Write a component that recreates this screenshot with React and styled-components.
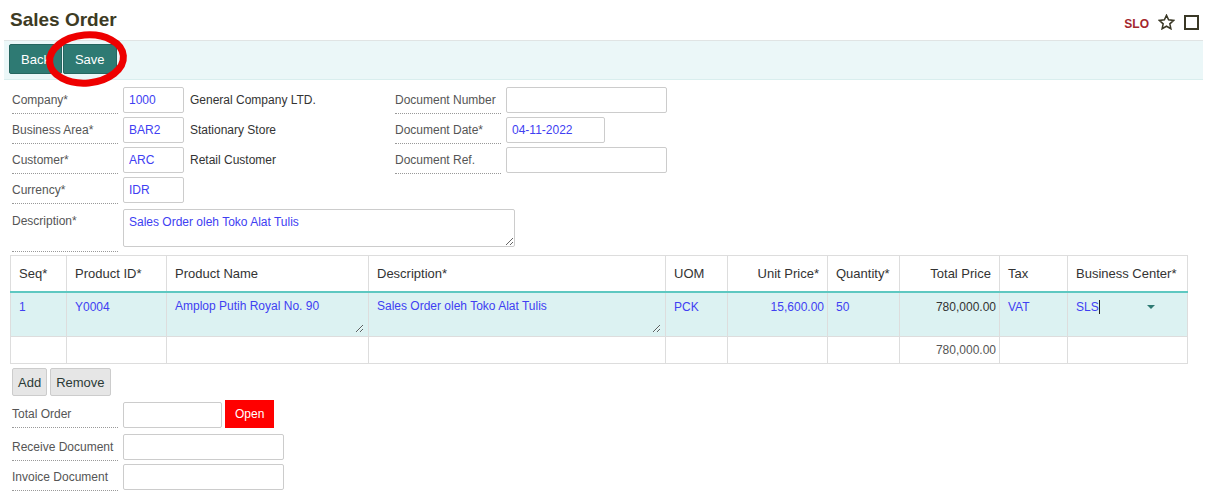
import React from "react";
import styled, { createGlobalStyle } from "styled-components";

const GlobalStyle = createGlobalStyle`
  body {
    margin: 0;
    background: #fff;
    font-family: "Liberation Sans", Arial, sans-serif;
  }
`;

const Page = styled.div`
  width: 1199px;
  padding: 0 4px;
`;

const Header = styled.div`
  height: 40px;
  display: flex;
  align-items: center;
  justify-content: space-between;
  padding: 0 4px 0 6px;
`;

const Title = styled.h1`
  margin: 0;
  font-size: 19px;
  font-weight: bold;
  color: #3d3b24;
`;

const HeaderTools = styled.div`
  display: flex;
  align-items: center;
  gap: 9px;
  margin-top: 4px;
`;

const DocCode = styled.span`
  font-size: 12px;
  font-weight: bold;
  color: #a3262e;
  margin-top: 3px;
`;

const Toolbar = styled.div`
  position: relative;
  height: 32px;
  padding: 3px 5px;
  display: flex;
  gap: 1px;
  background: #ebf7f8;
  border-top: 1px solid #e0e4e4;
  border-bottom: 1px solid #d9eeee;
`;

const ToolButton = styled.button`
  height: 30px;
  padding: 0 11px;
  background: #2e7a73;
  color: #fff;
  border: 1px solid #25655f;
  border-radius: 2px;
  font-family: inherit;
  font-size: 13px;
`;

const Highlight = styled.svg`
  position: absolute;
  left: 41px;
  top: -12px;
  pointer-events: none;
`;

const FormArea = styled.div`
  padding: ${(p) => (p.$flush ? "0" : "7px")} 0 0 8px;
`;

const Columns = styled.div`
  display: flex;
`;

const Column = styled.div`
  width: ${(p) => p.$width || "auto"};
`;

const Row = styled.div`
  display: flex;
  align-items: ${(p) => (p.$bottom ? "flex-end" : "flex-start")};
  margin-top: ${(p) => p.$top || 0}px;
  margin-bottom: ${(p) => (p.$gap === undefined ? 3 : p.$gap)}px;
`;

const Label = styled.div`
  flex-shrink: 0;
  width: 106px;
  height: ${(p) => (p.$tall ? "37px" : "26px")};
  padding-top: ${(p) => (p.$tall ? "7px" : "0")};
  display: flex;
  align-items: ${(p) => (p.$tall ? "flex-start" : "center")};
  border-bottom: 1px dotted #999;
  font-size: 12px;
  line-height: 14px;
  color: #555;
  white-space: nowrap;
`;

const Field = styled.input`
  box-sizing: border-box;
  margin-left: 5px;
  width: ${(p) => p.$width}px;
  height: 26px;
  padding: 0 5px;
  border: 1px solid #ccc;
  border-radius: 2px;
  font-family: inherit;
  font-size: 12px;
  color: #4040f2;
  background: #fff;
`;

const AreaField = styled.textarea`
  box-sizing: border-box;
  margin: 2px 0 0 5px;
  width: 392px;
  height: 38px;
  padding: 5px;
  border: 1px solid #ccc;
  border-radius: 2px;
  font-family: inherit;
  font-size: 12px;
  line-height: 14px;
  color: #4040f2;
  resize: both;
`;

const Static = styled.span`
  margin-left: 6px;
  font-size: 12px;
  line-height: 26px;
  color: #333;
`;

const GridWrap = styled.div`
  margin-left: 6px;
`;

const Grid = styled.table`
  width: 1177px;
  table-layout: fixed;
  border-collapse: collapse;
  font-size: 12px;
`;

const Th = styled.th`
  height: 35px;
  padding: 0 8px;
  border: 1px solid #ddd;
  border-bottom: 2px solid #5ec8c1;
  font-size: 13px;
  font-weight: normal;
  color: #333;
  text-align: ${(p) => p.$align || "left"};
  white-space: nowrap;
`;

const DataRow = styled.tr`
  background: #dcf2f2;
`;

const Td = styled.td`
  height: ${(p) => p.$h || 26}px;
  padding: ${(p) => (p.$align === "right" ? "0 3px 0 4px" : "0 4px")};
  border: 1px solid #ddd;
  vertical-align: ${(p) => (p.$middle ? "middle" : "top")};
  text-align: ${(p) => p.$align || "left"};
  color: ${(p) => p.$color || "#4040f2"};
`;

const CellText = styled.div`
  padding: ${(p) => (p.$plain ? "7px 0 0" : "7px 4px 0")};
  line-height: 14px;
`;

const CellArea = styled.textarea`
  box-sizing: border-box;
  display: block;
  width: 100%;
  height: 38px;
  margin-top: 2px;
  padding: 4px;
  border: none;
  background: transparent;
  font-family: inherit;
  font-size: 12px;
  line-height: 14px;
  color: #4040f2;
  resize: both;
  outline: none;
`;

const SelectCell = styled.div`
  display: flex;
  align-items: center;
  padding: 7px 4px 0;
  line-height: 14px;
`;

const Caret = styled.span`
  width: 1px;
  height: 14px;
  background: #222;
`;

const DropArrow = styled.span`
  margin-left: auto;
  margin-right: 24px;
  width: 0;
  height: 0;
  border-left: 4px solid transparent;
  border-right: 4px solid transparent;
  border-top: 4px solid #2e7a73;
`;

const Actions = styled.div`
  display: flex;
  gap: 3px;
  margin: 4px 0 0 8px;
`;

const GreyButton = styled.button`
  height: 28px;
  padding: 0 5px;
  background: #e6e6e6;
  border: 1px solid #ccc;
  border-radius: 2px;
  font-family: inherit;
  font-size: 13px;
  color: #2b3a36;
`;

const StatusButton = styled.button`
  margin-left: 3px;
  height: 28px;
  padding: 0 10px;
  background: #ff0000;
  border: none;
  font-family: inherit;
  font-size: 12px;
  color: #fff;
`;

const columns = [
  { name: "Seq*", width: 56 },
  { name: "Product ID*", width: 100 },
  { name: "Product Name", width: 202 },
  { name: "Description*", width: 297 },
  { name: "UOM", width: 62 },
  { name: "Unit Price*", width: 100, align: "right" },
  { name: "Quantity*", width: 72 },
  { name: "Total Price", width: 100, align: "right" },
  { name: "Tax", width: 68 },
  { name: "Business Center*", width: 120 },
];

const StarIcon = () => (
  <svg width="17" height="16" viewBox="0 0 24 23">
    <path
      d="M12 1.8l3 6.6 7.2.8-5.4 4.9 1.5 7.1L12 17.6l-6.3 3.6 1.5-7.1L1.8 9.2 9 8.4z"
      fill="none"
      stroke="#3a3826"
      strokeWidth="2.2"
    />
  </svg>
);

const BoxIcon = () => (
  <svg width="15" height="15" viewBox="0 0 15 15">
    <rect x="1" y="1" width="13" height="13" fill="none" stroke="#3a3826" strokeWidth="2" />
  </svg>
);

export default function App() {
  return (
    <Page>
      <GlobalStyle />
      <Header>
        <Title>Sales Order</Title>
        <HeaderTools>
          <DocCode>SLO</DocCode>
          <StarIcon />
          <BoxIcon />
        </HeaderTools>
      </Header>

      <Toolbar>
        <ToolButton>Back</ToolButton>
        <ToolButton>Save</ToolButton>
        {/* red hand-drawn ring round the Save button */}
        <Highlight width="86" height="60" viewBox="0 0 86 60">
          <ellipse
            cx="41.5"
            cy="30"
            rx="37"
            ry="24"
            fill="none"
            stroke="#ee0000"
            strokeWidth="7"
            transform="rotate(-5 41.5 30)"
          />
        </Highlight>
      </Toolbar>

      <FormArea>
        <Columns>
          <Column $width="383px">
            <Row>
              <Label>Company*</Label>
              <Field $width={61} defaultValue="1000" />
              <Static>General Company LTD.</Static>
            </Row>
            <Row>
              <Label>Business Area*</Label>
              <Field $width={61} defaultValue="BAR2" />
              <Static>Stationary Store</Static>
            </Row>
            <Row>
              <Label>Customer*</Label>
              <Field $width={61} defaultValue="ARC" />
              <Static>Retail Customer</Static>
            </Row>
            <Row>
              <Label>Currency*</Label>
              <Field $width={61} defaultValue="IDR" />
            </Row>
          </Column>
          <Column>
            <Row>
              <Label>Document Number</Label>
              <Field $width={161} defaultValue="" />
            </Row>
            <Row>
              <Label>Document Date*</Label>
              <Field $width={99} defaultValue="04-11-2022" />
            </Row>
            <Row>
              <Label>Document Ref.</Label>
              <Field $width={161} defaultValue="" />
            </Row>
          </Column>
        </Columns>
        <Row>
          <Label $tall>Description*</Label>
          <AreaField defaultValue="Sales Order oleh Toko Alat Tulis" />
        </Row>
      </FormArea>

      <GridWrap>
        <Grid>
          <colgroup>
            {columns.map((c) => (
              <col key={c.name} style={{ width: c.width }} />
            ))}
          </colgroup>
          <thead>
            <tr>
              {columns.map((c) => (
                <Th key={c.name} $align={c.align}>
                  {c.name}
                </Th>
              ))}
            </tr>
          </thead>
          <tbody>
            <DataRow>
              <Td $h={43}>
                <CellText>1</CellText>
              </Td>
              <Td>
                <CellText>Y0004</CellText>
              </Td>
              <Td>
                <CellArea defaultValue="Amplop Putih Royal No. 90" />
              </Td>
              <Td>
                <CellArea defaultValue="Sales Order oleh Toko Alat Tulis" />
              </Td>
              <Td>
                <CellText>PCK</CellText>
              </Td>
              <Td $align="right">
                <CellText $plain>15,600.00</CellText>
              </Td>
              <Td>
                <CellText>50</CellText>
              </Td>
              <Td $align="right" $color="#333">
                <CellText $plain>780,000.00</CellText>
              </Td>
              <Td>
                <CellText>VAT</CellText>
              </Td>
              <Td>
                <SelectCell>
                  SLS
                  <Caret />
                  <DropArrow />
                </SelectCell>
              </Td>
            </DataRow>
            <tr>
              <Td $h={26} />
              <Td />
              <Td />
              <Td />
              <Td />
              <Td />
              <Td />
              <Td $align="right" $middle $color="#555">
                780,000.00
              </Td>
              <Td />
              <Td />
            </tr>
          </tbody>
        </Grid>
      </GridWrap>

      <Actions>
        <GreyButton>Add</GreyButton>
        <GreyButton>Remove</GreyButton>
      </Actions>

      <FormArea $flush>
        <Row $bottom $top={4} $gap={6}>
          <Label>Total Order</Label>
          <Field $width={99} defaultValue="" />
          <StatusButton>Open</StatusButton>
        </Row>
        <Row>
          <Label>Receive Document</Label>
          <Field $width={161} defaultValue="" />
        </Row>
        <Row>
          <Label>Invoice Document</Label>
          <Field $width={161} defaultValue="" />
        </Row>
      </FormArea>
    </Page>
  );
}
